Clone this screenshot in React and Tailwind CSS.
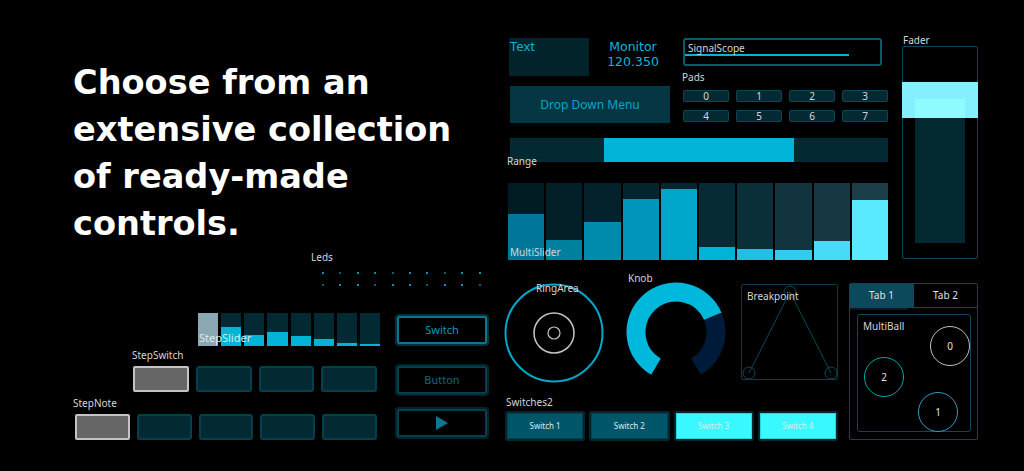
import React from 'react';

const label = 'font-["Noto_Sans",sans-serif] text-[10px] leading-none text-[#d6d6d6]';

const multiSlider = [
    { bg: '#021c24', fill: '#00779a', h: 46 },
    { bg: '#031f28', fill: '#00809f', h: 20 },
    { bg: '#04222b', fill: '#008aab', h: 38 },
    { bg: '#04252e', fill: '#0096bb', h: 61 },
    { bg: '#052832', fill: '#00a5ca', h: 71 },
    { bg: '#072b35', fill: '#00b4d8', h: 13 },
    { bg: '#0b2f39', fill: '#1ec0e4', h: 11 },
    { bg: '#11343e', fill: '#30ccee', h: 10 },
    { bg: '#173842', fill: '#45dbf9', h: 19 },
    { bg: '#1c3e48', fill: '#5aeaff', h: 60 },
];

const stepSlider = [33, 19, 11, 14, 10, 7, 3, 2];

const leds = [
    [1, 0, 1, 1, 0, 1, 1, 0, 1, 1],
    [0, 1, 1, 0, 1, 1, 0, 1, 1, 0],
];

const pads = [0, 1, 2, 3, 4, 5, 6, 7];

const StepButton = ({ active }) => (
    <div
        className={
            active
                ? 'flex-1 rounded-[2px] border-2 border-[#c4c4c4] bg-[#666666]'
                : 'flex-1 rounded-[3px] border-2 border-[#06404c] bg-[#032a32]'
        }
    />
);

const Knob = () => (
    <svg width="100" height="100" viewBox="0 0 100 100">
        <path d="M30 84.64 A40 40 0 1 1 86.82 34.37" fill="none" stroke="#00b8dc" strokeWidth="19" />
        <path d="M86.82 34.37 A40 40 0 0 1 70 84.64" fill="none" stroke="#001a3a" strokeWidth="19" />
    </svg>
);

const RingArea = () => (
    <svg width="100" height="100" viewBox="0 0 100 100">
        <circle cx="50" cy="50" r="48.5" fill="none" stroke="#00a8cc" strokeWidth="2" />
        <circle cx="50" cy="50" r="20" fill="none" stroke="#c6c6c6" strokeWidth="1.5" />
        <circle cx="50" cy="50" r="6" fill="none" stroke="#c6c6c6" strokeWidth="1.2" />
    </svg>
);

const Breakpoint = () => (
    <svg width="97" height="96" viewBox="0 0 97 96">
        <g fill="none" stroke="#0a4a58" strokeWidth="1">
            <line x1="49" y1="8" x2="8" y2="89" />
            <line x1="49" y1="8" x2="90" y2="89" />
            <circle cx="49" cy="8" r="6" />
            <circle cx="8" cy="89" r="6" />
            <circle cx="90" cy="89" r="6" />
        </g>
    </svg>
);

const Ball = ({ n, color, pos }) => (
    <div
        className={`absolute ${pos} w-[40px] h-[40px] rounded-full border-[1.5px] ${color} flex items-center justify-center font-["Noto_Sans",sans-serif] text-[10px] text-[#e0e0e0]`}
    >
        {n}
    </div>
);

const App = () => {
    return (
        <div className="relative w-[1024px] h-[471px] overflow-hidden bg-black">
            <h1 className='pl-[73px] pt-[59px] font-["DejaVu_Sans",sans-serif] text-[33.6px] font-bold leading-[47px] text-white'>
                Choose from an
                <br />
                extensive collection
                <br />
                of ready-made
                <br />
                controls.
            </h1>

            {/* Text */}
            <div className='absolute left-[509px] top-[38px] w-[80px] h-[38px] bg-[#03232a] px-[1px] font-["Noto_Sans",sans-serif] text-[13px] leading-[16px] text-[#00b4d8]'>
                Text
            </div>

            {/* Monitor */}
            <div className='absolute left-[596px] top-[40px] w-[74px] flex flex-col items-center gap-[1px] font-["DejaVu_Sans",sans-serif] text-[12.5px] leading-[14px] text-[#10b4d8]'>
                <span>Monitor</span>
                <span>120.350</span>
            </div>

            {/* SignalScope + Pads */}
            <div className="absolute left-[682px] top-[38px] w-[206px] flex flex-col">
                <div className="ml-[1px] w-[199px] h-[28px] rounded-[3px] border-2 border-[#0a5a6a] pt-[3px]">
                    <div className={`${label} pl-[3px]`}>SignalScope</div>
                    <div className="mt-[1px] h-[2px] w-[164px] bg-[#00b4d8]" />
                </div>
                <div className={`${label} mt-[6px]`}>Pads</div>
                <div className="ml-[1px] mt-[8px] grid grid-cols-4 gap-x-[7px] gap-y-[8px]">
                    {pads.map(p => (
                        <div
                            key={p}
                            className='h-[12px] rounded-[2px] border border-[#0b4654] bg-[#032a32] flex items-center justify-center font-["Noto_Sans",sans-serif] text-[10px] leading-none text-[#d6d6d6]'
                        >
                            {p}
                        </div>
                    ))}
                </div>
            </div>

            {/* Drop down */}
            <div className='absolute left-[510px] top-[86px] w-[160px] h-[37px] bg-[#063644] flex items-center justify-center font-["Noto_Sans",sans-serif] text-[12px] text-[#08a4c8]'>
                Drop Down Menu
            </div>

            {/* Range */}
            <div className="absolute left-[507px] top-[138px] flex flex-col">
                <div className="ml-[3px] w-[378px] h-[24px] bg-[#032a33] flex">
                    <div className="w-[94px]" />
                    <div className="w-[190px] bg-[#00b4d8]" />
                </div>
                <div className={`${label} mt-[-6px]`}>Range</div>
            </div>

            {/* MultiSlider */}
            <div className="absolute left-[508px] top-[183px] w-[380px] h-[77px] flex gap-[2px]">
                {multiSlider.map((b, i) => (
                    <div key={i} className="flex-1 flex flex-col justify-end" style={{ backgroundColor: b.bg }}>
                        <div style={{ height: b.h, backgroundColor: b.fill }} />
                    </div>
                ))}
                <div className={`${label} absolute left-[2px] top-[64px]`}>MultiSlider</div>
            </div>

            {/* Fader */}
            <div className="absolute left-[902px] top-[35px] flex flex-col gap-[1px]">
                <div className={`${label} pl-[1px]`}>Fader</div>
                <div className="relative w-[76px] h-[213px] rounded-[2px] border border-[#0a4a58] px-[12px] pt-[52px] pb-[15px]">
                    <div className="h-full bg-[#022a30]" />
                    <div className="absolute left-[-1px] right-[-1px] top-[35px] h-[36px] bg-[#84f0ff] px-[13px] pt-[17px]">
                        <div className="h-full bg-[#8efcff]" />
                    </div>
                </div>
            </div>

            {/* Leds */}
            <div className="absolute left-[311px] top-[252px] flex flex-col">
                <div className={label}>Leds</div>
                <div className="ml-[11px] mt-[10px] w-[174px] grid grid-cols-10 gap-y-[10px]">
                    {leds.flat().map((on, i) => (
                        <div key={i} className={on ? 'w-[2px] h-[2px] bg-[#0a90b0]' : 'w-[2px] h-[2px] bg-[#06606e]'} />
                    ))}
                </div>
            </div>

            {/* StepSlider */}
            <div className="absolute left-[198px] top-[313px] w-[182px] h-[33px] flex gap-[3px]">
                {stepSlider.map((h, i) => (
                    <div key={i} className={i === 0 ? 'flex-1 bg-[#8aa8b2]' : 'flex-1 bg-[#032a32] flex flex-col justify-end'}>
                        {i > 0 && <div className="bg-[#00b4d8]" style={{ height: h }} />}
                    </div>
                ))}
                <div className='absolute left-[1px] top-[19px] font-["Noto_Sans",sans-serif] text-[11px] leading-none text-[#dfe8ea]'>StepSlider</div>
            </div>

            {/* StepSwitch */}
            <div className="absolute left-[132px] top-[350px] flex flex-col gap-[6px]">
                <div className={label}>StepSwitch</div>
                <div className="ml-[1px] w-[244px] h-[26px] flex gap-[7px]">
                    <StepButton active />
                    <StepButton />
                    <StepButton />
                    <StepButton />
                </div>
            </div>

            {/* StepNote */}
            <div className="absolute left-[73px] top-[398px] flex flex-col gap-[6px]">
                <div className={label}>StepNote</div>
                <div className="ml-[2px] w-[302px] h-[26px] flex gap-[7px]">
                    <StepButton active />
                    <StepButton />
                    <StepButton />
                    <StepButton />
                    <StepButton />
                </div>
            </div>

            {/* Switch / Button / Play */}
            <div className="absolute left-[397px] top-[316px] w-[90px] flex flex-col">
                <div className='h-[28px] rounded-[2px] border-2 border-[#0a7890] shadow-[0_0_0_2px_#05303a] flex items-center justify-center font-["Noto_Sans",sans-serif] text-[11px] text-[#049cbc]'>
                    Switch
                </div>
                <div className='mt-[22px] h-[28px] rounded-[2px] border-2 border-[#06404e] shadow-[0_0_0_2px_#03242c] flex items-center justify-center font-["Noto_Sans",sans-serif] text-[11px] text-[#0a6a80]'>
                    Button
                </div>
                <div className="mt-[15px] h-[28px] rounded-[2px] border-2 border-[#06404e] shadow-[0_0_0_2px_#03242c] flex items-center justify-center">
                    <svg width="12" height="14" viewBox="0 0 12 14">
                        <path d="M0 0 L12 7 L0 14 Z" fill="#0a7890" />
                    </svg>
                </div>
            </div>

            {/* RingArea */}
            <div className="absolute left-[504px] top-[283px]">
                <RingArea />
                <div className={`${label} absolute left-[32px] top-[0px]`}>RingArea</div>
            </div>

            {/* Knob */}
            <div className="absolute left-[626px] top-[273px] flex flex-col">
                <div className={`${label} pl-[2px] mb-[-1px]`}>Knob</div>
                <Knob />
            </div>

            {/* Breakpoint */}
            <div className="absolute left-[741px] top-[284px] w-[97px] h-[96px] rounded-[2px] border border-[#0a3a48]">
                <div className="absolute left-[-1px] top-[-1px]">
                    <Breakpoint />
                </div>
                <div className={`${label} absolute left-[5px] top-[6px]`}>Breakpoint</div>
            </div>

            {/* Tabs + MultiBall */}
            <div className="absolute left-[849px] top-[283px] w-[129px] h-[157px] rounded-[2px] border border-[#0a4a58]">
                <div className='flex h-[24px] border-b border-[#0a4a58] font-["Noto_Sans",sans-serif] text-[10px] text-[#e0e0e0]'>
                    <div className="flex-1 bg-[#0a4a5a] flex items-center justify-center">Tab 1</div>
                    <div className="flex-1 border-l border-[#0a4a58] flex items-center justify-center">Tab 2</div>
                </div>
                <div className="h-[2px] w-[58px] bg-[#0a1a1e]" />
                <div className="relative ml-[7px] mt-[4px] w-[114px] h-[118px] rounded-[3px] border border-[#0a4a58]">
                    <div className={`${label} absolute left-[5px] top-[6px]`}>MultiBall</div>
                    <Ball n="0" color="border-[#c0c0c0]" pos="left-[72px] top-[11px]" />
                    <Ball n="2" color="border-[#00a8a8]" pos="left-[6px] top-[42px]" />
                    <Ball n="1" color="border-[#3a98c0]" pos="left-[60px] top-[77px]" />
                </div>
            </div>

            {/* Switches2 */}
            <div className="absolute left-[505px] top-[397px] flex flex-col gap-[4px]">
                <div className={`${label} pl-[1px]`}>Switches2</div>
                <div className='w-[333px] h-[30px] flex gap-[4px] font-["Noto_Sans",sans-serif] text-[8px] text-[#dcecef]'>
                    {[1, 2, 3, 4].map(n => (
                        <div key={n} className="flex-1 rounded-[2px] bg-[#03262e] p-[2px]">
                            <div
                                className={
                                    n > 2
                                        ? 'h-full border border-[#2ad6e0] bg-[#3af8ff] flex items-center justify-center'
                                        : 'h-full border border-[#004250] bg-[#005668] flex items-center justify-center'
                                }
                            >
                                Switch {n}
                            </div>
                        </div>
                    ))}
                </div>
            </div>
        </div>
    );
};

export default App;
